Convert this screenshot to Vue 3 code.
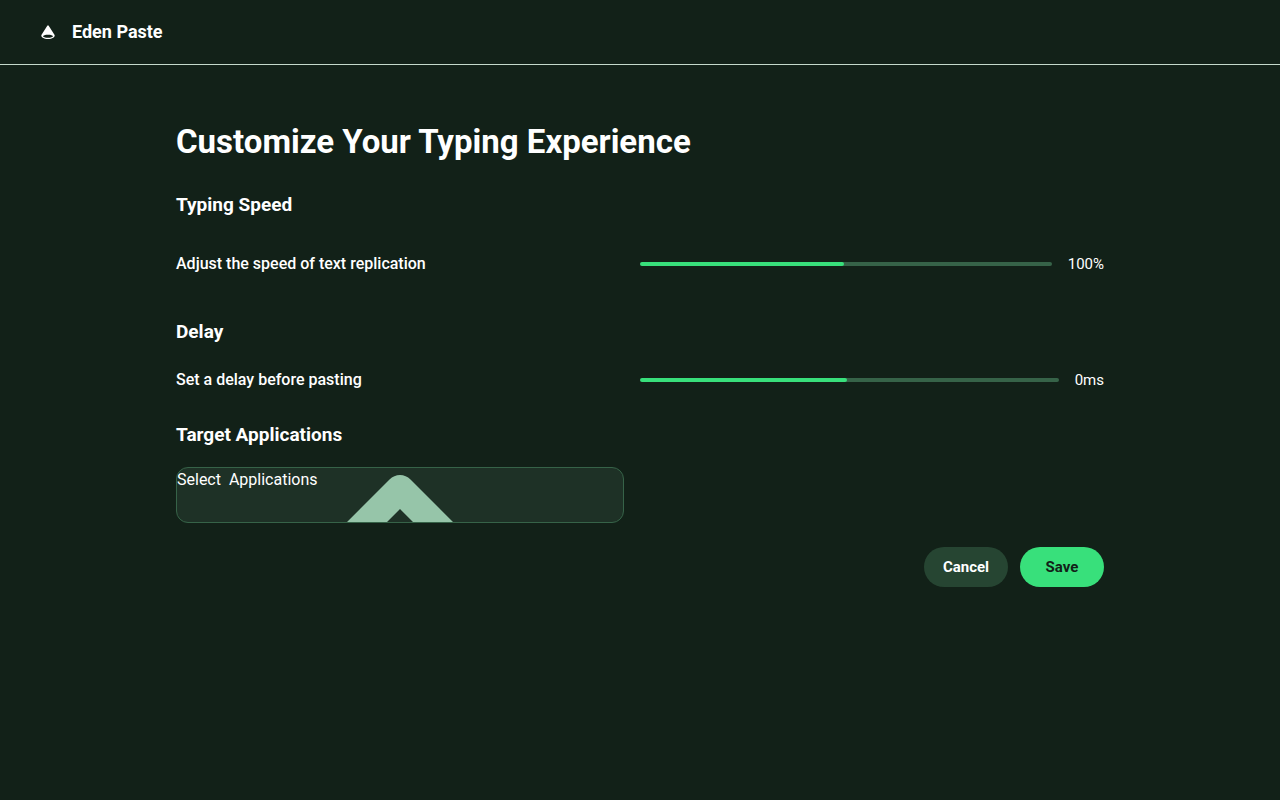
<script setup>
import { ref } from 'vue'

const speed = ref(49)
const delay = ref(49)
</script>

<template>
  <div class="page">
    <header class="topbar">
      <svg class="logo" viewBox="0 0 16 16" aria-hidden="true">
        <path
          fill="currentColor"
          fill-rule="evenodd"
          d="M7.300 1.800Q8 .9 8.700 1.800L14.600 11C15.300 13.300 12.200 15 8 15S.7 13.300 1.400 11ZM8 10.700C5.200 10.700 3 11.400 3 12.200S5.200 13.700 8 13.700s5-.7 5-1.500S10.800 10.700 8 10.700Z"
        />
      </svg>
      <span class="brand">Eden Paste</span>
    </header>

    <main class="content">
      <h1>Customize Your Typing Experience</h1>

      <section class="speed">
        <h2>Typing Speed</h2>
        <div class="row">
          <label for="speed">Adjust the speed of text replication</label>
          <div class="control">
            <input id="speed" v-model="speed" type="range" min="0" max="100" :style="{ '--fill': speed + '%' }" />
            <output for="speed">100%</output>
          </div>
        </div>
      </section>

      <section class="delay">
        <h2>Delay</h2>
        <div class="row">
          <label for="delay">Set a delay before pasting</label>
          <div class="control">
            <input id="delay" v-model="delay" type="range" min="0" max="100" :style="{ '--fill': delay + '%' }" />
            <output for="delay">0ms</output>
          </div>
        </div>
      </section>

      <section class="targets">
        <h2><label for="apps">Target Applications</label></h2>
        <div class="picker">
          <select id="apps">
            <option>Select&nbsp; Applications</option>
          </select>
          <svg class="caret" viewBox="0 0 106 47" aria-hidden="true">
            <path fill="currentColor" d="M0 47 42.500 4.500Q47 0 53 0T63.500 4.500L106 47H66L53 34 40 47Z" />
          </svg>
        </div>
      </section>

      <div class="actions">
        <button type="button" class="cancel">Cancel</button>
        <button type="button" class="save">Save</button>
      </div>
    </main>
  </div>
</template>

<style>
body {
  background: #122118;
}
</style>

<style scoped>
.page {
  min-height: 100vh;
  background: #122118;
  color: #fff;
  font-family: Roboto, "Liberation Sans", sans-serif;
  font-size: 16px;
  line-height: 24px;
}
.topbar {
  display: flex;
  align-items: center;
  gap: 16px;
  padding: 20px 40px;
  border-bottom: 1px solid #c5d9cb;
}
.logo {
  width: 16px;
  height: 16px;
}
.brand {
  font-size: 18px;
  font-weight: 700;
}
.content {
  box-sizing: border-box;
  max-width: 960px;
  margin: 0 auto;
  padding: 57px 16px 40px;
}
h1 {
  margin: 0;
  font-size: 33px;
  font-weight: 700;
  line-height: 40px;
}
h2 {
  margin: 0;
  font-size: 19px;
  font-weight: 700;
  line-height: 24px;
}
.row {
  display: grid;
  grid-template-columns: 1fr 1fr;
  align-items: center;
  margin-top: 24px;
}
.row label {
  font-weight: 500;
}
.speed {
  margin-top: 31px;
}
.speed .row {
  margin-top: 35px;
}
.delay {
  margin-top: 44px;
}
.targets {
  margin-top: 31px;
}
.control {
  display: flex;
  align-items: center;
  gap: 16px;
}
output {
  font-size: 15px;
}
input {
  appearance: none;
  flex: 1;
  min-width: 0;
  height: 4px;
  margin: 0;
  border-radius: 2px;
  background: linear-gradient(to right, #38e07b var(--fill), #366348 var(--fill));
}
input::-webkit-slider-thumb {
  appearance: none;
  width: 4px;
  height: 4px;
  border-radius: 2px;
  background: #38e07b;
}
.picker {
  position: relative;
  max-width: 448px;
  margin-top: 20px;
}
select {
  appearance: none;
  display: block;
  box-sizing: border-box;
  width: 100%;
  height: 56px;
  margin: 0;
  padding: 0 0 32px;
  border: 1px solid #366348;
  border-radius: 12px;
  background: #1e3126;
  color: #fff;
  font: inherit;
}
.caret {
  position: absolute;
  bottom: 1px;
  left: 50%;
  width: 106px;
  height: 47px;
  margin-left: -53px;
  color: #96c5a9;
  pointer-events: none;
}
.actions {
  display: flex;
  justify-content: flex-end;
  gap: 12px;
  margin-top: 24px;
}
button {
  min-width: 84px;
  height: 40px;
  padding: 0 16px;
  border: 0;
  border-radius: 20px;
  font: inherit;
  font-size: 15px;
  font-weight: 700;
}
.cancel {
  background: #264532;
  color: #fff;
}
.save {
  background: #38e07b;
  color: #122118;
}
</style>
